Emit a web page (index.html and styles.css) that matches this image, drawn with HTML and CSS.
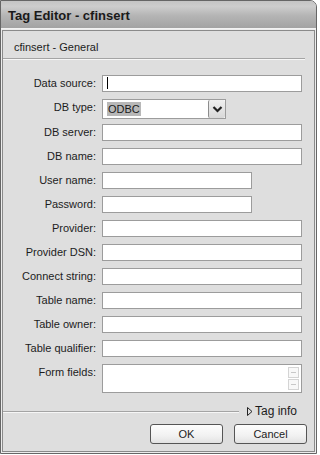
FILE: index.html
```html
<!DOCTYPE html>
<html lang="en">
<head>
	<meta charset="UTF-8">
	<title>Tag Editor - cfinsert</title>
	<link rel="stylesheet" href="styles.css">
</head>
<body>
	<!-- 对话框 -->
	<div class="window">
		<div class="titlebar">Tag Editor - cfinsert</div>
		<div class="frame">
			<div class="panel">
				<div class="heading">cfinsert - General</div>
				<!-- 表单 -->
				<div class="form">
					<div class="row">
						<label>Data source:</label>
						<div class="field"><span class="caret"></span></div>
					</div>
					<div class="row row-select">
						<label>DB type:</label>
						<div class="select">
							<span class="select-value"><span class="picked">ODBC</span></span>
							<span class="select-btn">
								<svg width="15" height="16" viewBox="0 0 15 16"><polyline points="3.5,6 7.5,10 11.5,6" fill="none" stroke="#222" stroke-width="2.2"/></svg>
							</span>
						</div>
					</div>
					<div class="row">
						<label>DB server:</label>
						<div class="field"></div>
					</div>
					<div class="row">
						<label>DB name:</label>
						<div class="field"></div>
					</div>
					<div class="row">
						<label>User name:</label>
						<div class="field short"></div>
					</div>
					<div class="row">
						<label>Password:</label>
						<div class="field short"></div>
					</div>
					<div class="row">
						<label>Provider:</label>
						<div class="field"></div>
					</div>
					<div class="row">
						<label>Provider DSN:</label>
						<div class="field"></div>
					</div>
					<div class="row">
						<label>Connect string:</label>
						<div class="field"></div>
					</div>
					<div class="row">
						<label>Table name:</label>
						<div class="field"></div>
					</div>
					<div class="row">
						<label>Table owner:</label>
						<div class="field"></div>
					</div>
					<div class="row">
						<label>Table qualifier:</label>
						<div class="field"></div>
					</div>
					<div class="row row-area">
						<label>Form fields:</label>
						<div class="field area">
							<div class="spin">
								<span class="spin-btn"><i></i></span>
								<span class="spin-btn"><i></i></span>
							</div>
						</div>
					</div>
				</div>
				<!-- Tag info -->
				<div class="info-row">
					<span class="rule"></span>
					<span class="tag-info">
						<svg width="6" height="9" viewBox="0 0 6 9"><polygon points="0.5,0.5 5,4.5 0.5,8.5" fill="none" stroke="#222" stroke-width="1"/></svg>
						Tag info
					</span>
				</div>
				<!-- 按钮 -->
				<div class="actions">
					<button class="btn">OK</button>
					<button class="btn">Cancel</button>
				</div>
			</div>
		</div>
	</div>
</body>
</html>
```

FILE: styles.css
```css
*{
	padding: 0;
	margin: 0;
	box-sizing: border-box;
}
body{
	background: #fff;
	font-family: "Liberation Sans", Arial, sans-serif;
	font-size: 11px;
	color: #1c1c1c;
}
/*窗口*/
.window{
	display: flex;
	flex-direction: column;
	width: 317px;
	height: 454px;
	border: 1px solid #666;
	border-radius: 0 7px 0 0;
	background: #dedede;
	overflow: hidden;
}
.titlebar{
	height: 28px;
	padding: 1px 0 0 7px;
	line-height: 27px;
	font-size: 13px;
	font-weight: bold;
	color: #1a1a1a;
	background: linear-gradient(#c4c4c4, #cdcdcd 20%, #b4b4b4 55%, #a6a6a6 92%, #a2a2a2);
	border-bottom: 1px solid #f2f2f2;
}
.frame{
	flex: 1;
	display: flex;
	padding: 1px;
	background: #ececec;
}
.panel{
	flex: 1;
	display: flex;
	flex-direction: column;
	border: 1px solid #8a8a8a;
	background: #dedede;
}
/*标题行*/
.heading{
	padding: 8px 0 3px 11px;
	margin-right: 9px;
	line-height: 16px;
	border-bottom: 1px solid #a4a4a4;
	box-shadow: 0 1px 0 #f6f6f6;
}
/*表单*/
.form{
	margin-top: 16px;
}
.row{
	display: flex;
	align-items: flex-start;
	height: 24px;
}
.row-select{
	height: 25px;
}
.row-area{
	height: 29px;
}
.row>label{
	width: 93px;
	height: 17px;
	line-height: 17px;
	text-align: right;
	margin-right: 6px;
	white-space: nowrap;
}
.field{
	position: relative;
	width: 200px;
	height: 17px;
	background: #fff;
	border: 1px solid #9c9c9c;
}
.field.short{
	width: 150px;
}
.field.area{
	height: 29px;
	display: flex;
	justify-content: flex-end;
	padding: 2px 2px 0 0;
}
.caret{
	position: absolute;
	left: 4px;
	top: 1px;
	width: 1px;
	height: 12px;
	background: #000;
}
/*下拉框*/
.select{
	display: flex;
	width: 124px;
	height: 20px;
	background: #fff;
	border: 1px solid #9c9c9c;
}
.select-value{
	flex: 1;
	padding: 2px 0 0 4px;
}
.picked{
	display: inline-block;
	height: 14px;
	line-height: 14px;
	padding: 0 1px;
	background: #b8b8b8;
	color: #1a1a1a;
}
.select-btn{
	width: 17px;
	display: flex;
	align-items: center;
	justify-content: center;
	background: linear-gradient(#f0f0f0, #d8d8d8);
	border-left: 1px solid #8c8c8c;
	border-radius: 2px;
}
/*滚动按钮*/
.spin{
	display: flex;
	flex-direction: column;
	gap: 1px;
}
.spin-btn{
	display: flex;
	align-items: center;
	justify-content: center;
	width: 11px;
	height: 11px;
	border: 1px solid #d4d4d4;
	background: #f8f8f8;
}
.spin-btn>i{
	width: 5px;
	height: 1px;
	background: #c8c8c8;
}
/*Tag info*/
.info-row{
	display: flex;
	align-items: center;
	height: 16px;
	margin-top: 10px;
	padding-right: 17px;
}
.rule{
	flex: 1;
	height: 2px;
	margin-top: 2px;
	border-top: 1px solid #a4a4a4;
	border-bottom: 1px solid #f6f6f6;
	margin-right: 8px;
}
.tag-info{
	display: flex;
	align-items: center;
	gap: 2px;
	font-size: 12px;
}
/*按钮*/
.actions{
	display: flex;
	justify-content: flex-end;
	gap: 11px;
	margin-top: 5px;
	padding-right: 7px;
}
.btn{
	width: 73px;
	height: 20px;
	font-family: "Liberation Sans", Arial, sans-serif;
	font-size: 11px;
	color: #1c1c1c;
	border: 1px solid #555;
	border-radius: 3px;
	background: linear-gradient(#fdfdfd, #f1f1f1 60%, #e2e2e2);
}
```
